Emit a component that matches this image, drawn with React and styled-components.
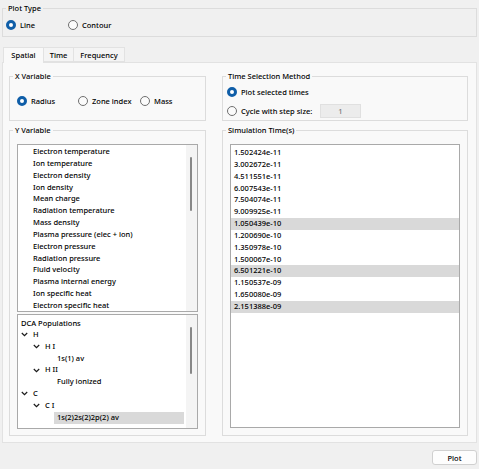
import React from "react";
import styled, { createGlobalStyle } from "styled-components";

const GlobalStyle = createGlobalStyle`
  html, body {
    margin: 0;
    padding: 0;
    background: #f0f0f0;
  }
  body {
    font-family: "Noto Sans", "Open Sans", "DejaVu Sans", sans-serif;
    font-size: 7.5px;
    font-weight: 500;
    color: #000;
  }
  * {
    box-sizing: border-box;
  }
`;

const Window = styled.div`
  width: 479px;
  height: 469px;
  background: #f0f0f0;
  padding: 2px 2px 0 2px;
  display: flex;
  flex-direction: column;
`;

const Group = styled.fieldset`
  margin: 0;
  min-width: 0;
  padding: 0;
  border: 1px solid #dcdcdc;
  display: flex;
  flex-direction: column;
`;

const Title = styled.legend`
  margin-left: 3px;
  padding: 0 2px;
  line-height: 12px;
  height: 12px;
`;

const Body = styled.div`
  flex: 1;
  min-height: 0;
  display: flex;
  flex-direction: column;
  padding: ${(p) => p.$pad || "0"};
  gap: ${(p) => p.$gap || "0"};
`;

const RadioRow = styled.div`
  display: flex;
  align-items: center;
  height: ${(p) => p.$h || "22px"};
`;

const RadioItem = styled.label`
  display: flex;
  align-items: center;
  gap: 4px;
  width: ${(p) => p.$w || "auto"};
  white-space: nowrap;
  line-height: 12px;
`;

const Dot = styled.span`
  width: 10px;
  height: 10px;
  border-radius: 50%;
  flex: none;
  background: ${(p) => (p.$on ? "#fff" : "#fbfbfb")};
  border: ${(p) => (p.$on ? "3px solid #0f5ea8" : "1px solid #6f6f6f")};
`;

const StepInput = styled.div`
  width: 41px;
  height: 14px;
  background: #ececec;
  border: 1px solid #e0e0e0;
  color: #7a7a7a;
  line-height: 12px;
  text-align: center;
`;

const TabBar = styled.div`
  display: flex;
  margin: 10px 0 0 1px;
  height: 15px;
  position: relative;
  z-index: 1;
`;

const Tab = styled.div`
  width: ${(p) => p.$w};
  height: ${(p) => (p.$active ? "16px" : "15px")};
  line-height: 14px;
  text-align: center;
  background: ${(p) => (p.$active ? "#f9f9f9" : "#f4f4f4")};
  border: 1px solid #e2e2e2;
  border-bottom: ${(p) => (p.$active ? "none" : "1px solid #e2e2e2")};
  border-left: ${(p) => (p.$first ? "1px solid #e2e2e2" : "none")};
`;

const Panel = styled.div`
  height: 381px;
  background: #f9f9f9;
  border: 1px solid #e2e2e2;
  padding: 7px 7px 6px 6px;
  display: grid;
  grid-template-columns: 197px 246px;
  grid-template-rows: 51px 312px;
  column-gap: 16px;
  row-gap: 3px;
`;

const ListBox = styled.div`
  background: #fff;
  border: 1px solid #a9a9a9;
  height: ${(p) => p.$h || "auto"};
  flex: ${(p) => (p.$grow ? "1" : "none")};
  display: flex;
  overflow: hidden;
`;

const Rows = styled.div`
  flex: 1;
  padding-top: ${(p) => p.$top || "1px"};
  min-width: 0;
`;

const Row = styled.div`
  height: 11.85px;
  line-height: 11.85px;
  padding-left: ${(p) => p.$left || "3px"};
  background: ${(p) => (p.$sel ? "#d9d9d9" : "transparent")};
  white-space: nowrap;
`;

const Gutter = styled.div`
  width: 11px;
  flex: none;
  background: #f4f4f4;
  padding-left: 4px;
`;

const Thumb = styled.div`
  width: 2px;
  margin-top: ${(p) => p.$top};
  height: ${(p) => p.$h};
  background: #878787;
  border-radius: 1px;
`;

const TreeRow = styled.div`
  display: flex;
  align-items: center;
  height: 11.85px;
  padding-left: ${(p) => 3 + p.$level * 12}px;
  white-space: nowrap;
`;

const Chevron = styled.span`
  width: 12px;
  flex: none;
  display: flex;
  align-items: center;
`;

const TreeLabel = styled.span`
  flex: 1;
  margin: 0 2px 0 -3px;
  padding-left: 3px;
  line-height: 11.85px;
  background: ${(p) => (p.$sel ? "#d9d9d9" : "transparent")};
`;

const Footer = styled.div`
  display: flex;
  justify-content: flex-end;
  padding-top: 7px;
`;

const Button = styled.button`
  width: 45px;
  height: 15px;
  padding: 0;
  font-family: inherit;
  font-size: 7.5px;
  font-weight: 500;
  color: #000;
  background: #fdfdfd;
  border: 1px solid #d0d0d0;
  border-radius: 3px;
`;

const yVars = [
  "Electron temperature",
  "Ion temperature",
  "Electron density",
  "Ion density",
  "Mean charge",
  "Radiation temperature",
  "Mass density",
  "Plasma pressure (elec + ion)",
  "Electron pressure",
  "Radiation pressure",
  "Fluid velocity",
  "Plasma internal energy",
  "Ion specific heat",
  "Electron specific heat",
];

const times = [
  "1.502424e-11",
  "3.002672e-11",
  "4.511551e-11",
  "6.007543e-11",
  "7.504074e-11",
  "9.009925e-11",
  "1.050439e-10",
  "1.200690e-10",
  "1.350978e-10",
  "1.500067e-10",
  "6.501221e-10",
  "1.150537e-09",
  "1.650080e-09",
  "2.151388e-09",
];
const picked = [6, 10, 13];

const tree = [
  { label: "H", level: 0, open: true },
  { label: "H I", level: 1, open: true },
  { label: "1s(1) av", level: 2 },
  { label: "H II", level: 1, open: true },
  { label: "Fully ionized", level: 2 },
  { label: "C", level: 0, open: true },
  { label: "C I", level: 1, open: true },
  { label: "1s(2)2s(2)2p(2) av", level: 2, selected: true },
];

const Radio = ({ on, w, children }) => (
  <RadioItem $w={w}>
    <Dot $on={on} />
    {children}
  </RadioItem>
);

const Down = () => (
  <svg width="7" height="5" viewBox="0 0 7 5">
    <polyline points="0.8,1 3.5,3.7 6.2,1" fill="none" stroke="#1a1a1a" strokeWidth="1.2" />
  </svg>
);

export default function App() {
  return (
    <>
      <GlobalStyle />
      <Window>
        <Group>
          <Title>Plot Type</Title>
          <Body $pad="0 0 0 3px">
            <RadioRow>
              <Radio on w="62px">Line</Radio>
              <Radio>Contour</Radio>
            </RadioRow>
          </Body>
        </Group>

        <TabBar>
          <Tab $w="41px" $active $first>Spatial</Tab>
          <Tab $w="30px">Time</Tab>
          <Tab $w="51px">Frequency</Tab>
        </TabBar>

        <Panel>
          <Group>
            <Title>X Variable</Title>
            <Body $pad="0 0 0 7px">
              <RadioRow $h="38px">
                <Radio on w="61px">Radius</Radio>
                <Radio w="62px">Zone index</Radio>
                <Radio>Mass</Radio>
              </RadioRow>
            </Body>
          </Group>

          <Group>
            <Title>Time Selection Method</Title>
            <Body $pad="2px 0 0 4px" $gap="3px">
              <RadioRow $h="16px">
                <Radio on>Plot selected times</Radio>
              </RadioRow>
              <RadioRow $h="16px">
                <Radio w="93px">Cycle with step size:</Radio>
                <StepInput>1</StepInput>
              </RadioRow>
            </Body>
          </Group>

          <Group>
            <Title>Y Variable</Title>
            <Body $pad="8px 7px 6px 7px" $gap="2px">
              <ListBox $h="168px">
                <Rows>
                  {yVars.map((v) => (
                    <Row key={v} $left="15px">{v}</Row>
                  ))}
                </Rows>
                <Gutter>
                  <Thumb $top="12px" $h="54px" />
                </Gutter>
              </ListBox>
              <ListBox $h="115px">
                <Rows $top="2px">
                  <TreeRow $level={0}>DCA Populations</TreeRow>
                  {tree.map((n) => (
                    <TreeRow key={n.label} $level={n.level}>
                      <Chevron>{n.open && <Down />}</Chevron>
                      <TreeLabel $sel={n.selected}>{n.label}</TreeLabel>
                    </TreeRow>
                  ))}
                </Rows>
                <Gutter>
                  <Thumb $top="12px" $h="47px" />
                </Gutter>
              </ListBox>
            </Body>
          </Group>

          <Group>
            <Title>Simulation Time(s)</Title>
            <Body $pad="8px 7px 7px 7px">
              <ListBox $grow>
                <Rows $top="2px">
                  {times.map((t, i) => (
                    <Row key={t} $sel={picked.includes(i)}>{t}</Row>
                  ))}
                </Rows>
              </ListBox>
            </Body>
          </Group>
        </Panel>

        <Footer>
          <Button>Plot</Button>
        </Footer>
      </Window>
    </>
  );
}
